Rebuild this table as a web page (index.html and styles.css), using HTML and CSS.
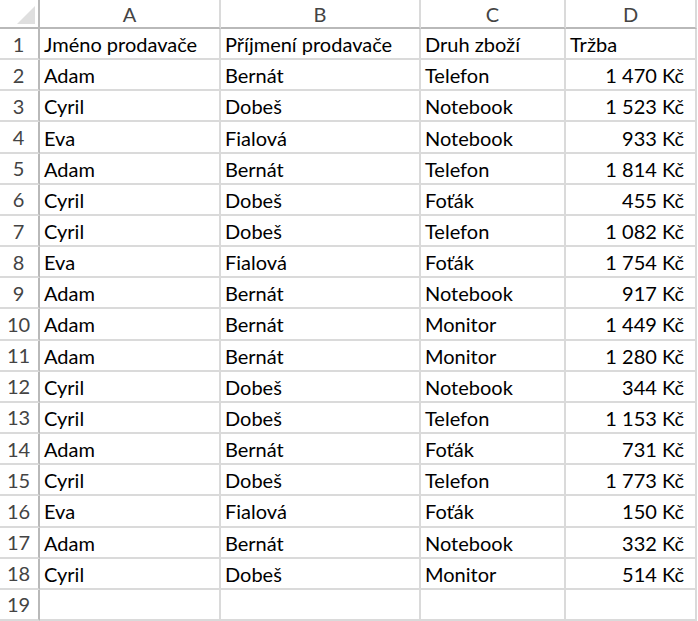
FILE: index.html
```html
<!DOCTYPE html>
<html lang="cs">
<head>
<meta charset="utf-8">
<title>Tržby</title>
<link rel="stylesheet" href="styles.css">
</head>
<body>
<div class="sheet">
  <div class="corner"><span class="tri"></span></div>
  <div class="colhead">A</div>
  <div class="colhead">B</div>
  <div class="colhead">C</div>
  <div class="colhead">D</div>

  <div class="rowhead">1</div><div class="cell">Jméno prodavače</div><div class="cell">Příjmení prodavače</div><div class="cell">Druh zboží</div><div class="cell">Tržba</div>
  <div class="rowhead">2</div><div class="cell">Adam</div><div class="cell">Bernát</div><div class="cell">Telefon</div><div class="cell num">1 470 Kč</div>
  <div class="rowhead">3</div><div class="cell">Cyril</div><div class="cell">Dobeš</div><div class="cell">Notebook</div><div class="cell num">1 523 Kč</div>
  <div class="rowhead">4</div><div class="cell">Eva</div><div class="cell">Fialová</div><div class="cell">Notebook</div><div class="cell num">933 Kč</div>
  <div class="rowhead">5</div><div class="cell">Adam</div><div class="cell">Bernát</div><div class="cell">Telefon</div><div class="cell num">1 814 Kč</div>
  <div class="rowhead">6</div><div class="cell">Cyril</div><div class="cell">Dobeš</div><div class="cell">Foťák</div><div class="cell num">455 Kč</div>
  <div class="rowhead">7</div><div class="cell">Cyril</div><div class="cell">Dobeš</div><div class="cell">Telefon</div><div class="cell num">1 082 Kč</div>
  <div class="rowhead">8</div><div class="cell">Eva</div><div class="cell">Fialová</div><div class="cell">Foťák</div><div class="cell num">1 754 Kč</div>
  <div class="rowhead">9</div><div class="cell">Adam</div><div class="cell">Bernát</div><div class="cell">Notebook</div><div class="cell num">917 Kč</div>
  <div class="rowhead">10</div><div class="cell">Adam</div><div class="cell">Bernát</div><div class="cell">Monitor</div><div class="cell num">1 449 Kč</div>
  <div class="rowhead">11</div><div class="cell">Adam</div><div class="cell">Bernát</div><div class="cell">Monitor</div><div class="cell num">1 280 Kč</div>
  <div class="rowhead">12</div><div class="cell">Cyril</div><div class="cell">Dobeš</div><div class="cell">Notebook</div><div class="cell num">344 Kč</div>
  <div class="rowhead">13</div><div class="cell">Cyril</div><div class="cell">Dobeš</div><div class="cell">Telefon</div><div class="cell num">1 153 Kč</div>
  <div class="rowhead">14</div><div class="cell">Adam</div><div class="cell">Bernát</div><div class="cell">Foťák</div><div class="cell num">731 Kč</div>
  <div class="rowhead">15</div><div class="cell">Cyril</div><div class="cell">Dobeš</div><div class="cell">Telefon</div><div class="cell num">1 773 Kč</div>
  <div class="rowhead">16</div><div class="cell">Eva</div><div class="cell">Fialová</div><div class="cell">Foťák</div><div class="cell num">150 Kč</div>
  <div class="rowhead">17</div><div class="cell">Adam</div><div class="cell">Bernát</div><div class="cell">Notebook</div><div class="cell num">332 Kč</div>
  <div class="rowhead">18</div><div class="cell">Cyril</div><div class="cell">Dobeš</div><div class="cell">Monitor</div><div class="cell num">514 Kč</div>
  <div class="rowhead">19</div><div class="cell"></div><div class="cell"></div><div class="cell"></div><div class="cell"></div>
</div>
</body>
</html>
```

FILE: styles.css
```css
html, body {
  margin: 0;
  padding: 0;
  background: #ffffff;
}

body {
  width: 698px;
  height: 621px;
  overflow: hidden;
  font-family: Lato, "Open Sans", sans-serif;
  font-size: 20px;
  color: #000000;
}

.sheet {
  display: grid;
  grid-template-columns: 40px 181px 200px 145px 131px;
  grid-template-rows: 29px repeat(19, 31.17px);
}

.corner,
.colhead,
.rowhead,
.cell {
  box-sizing: border-box;
  border-right: 2px solid #dadada;
  border-bottom: 2px solid #dadada;
  white-space: nowrap;
  overflow: hidden;
}

.corner {
  position: relative;
  border-right-color: #b9b9b9;
  border-bottom-color: #b9b9b9;
}

.tri {
  position: absolute;
  right: 3px;
  bottom: 3px;
  width: 0;
  height: 0;
  border-left: 18px solid transparent;
  border-bottom: 18px solid #dfdfdf;
}

.colhead {
  display: flex;
  align-items: center;
  justify-content: center;
  color: #444444;
  border-bottom-color: #b9b9b9;
  padding-top: 1px;
}

.rowhead {
  display: flex;
  align-items: center;
  justify-content: center;
  padding-right: 1px;
  color: #444444;
  border-right-color: #b9b9b9;
}

.cell {
  display: flex;
  align-items: center;
  padding-left: 4px;
  padding-top: 1px;
}

.num {
  justify-content: flex-end;
  padding-left: 0;
  padding-right: 11px;
}
```
